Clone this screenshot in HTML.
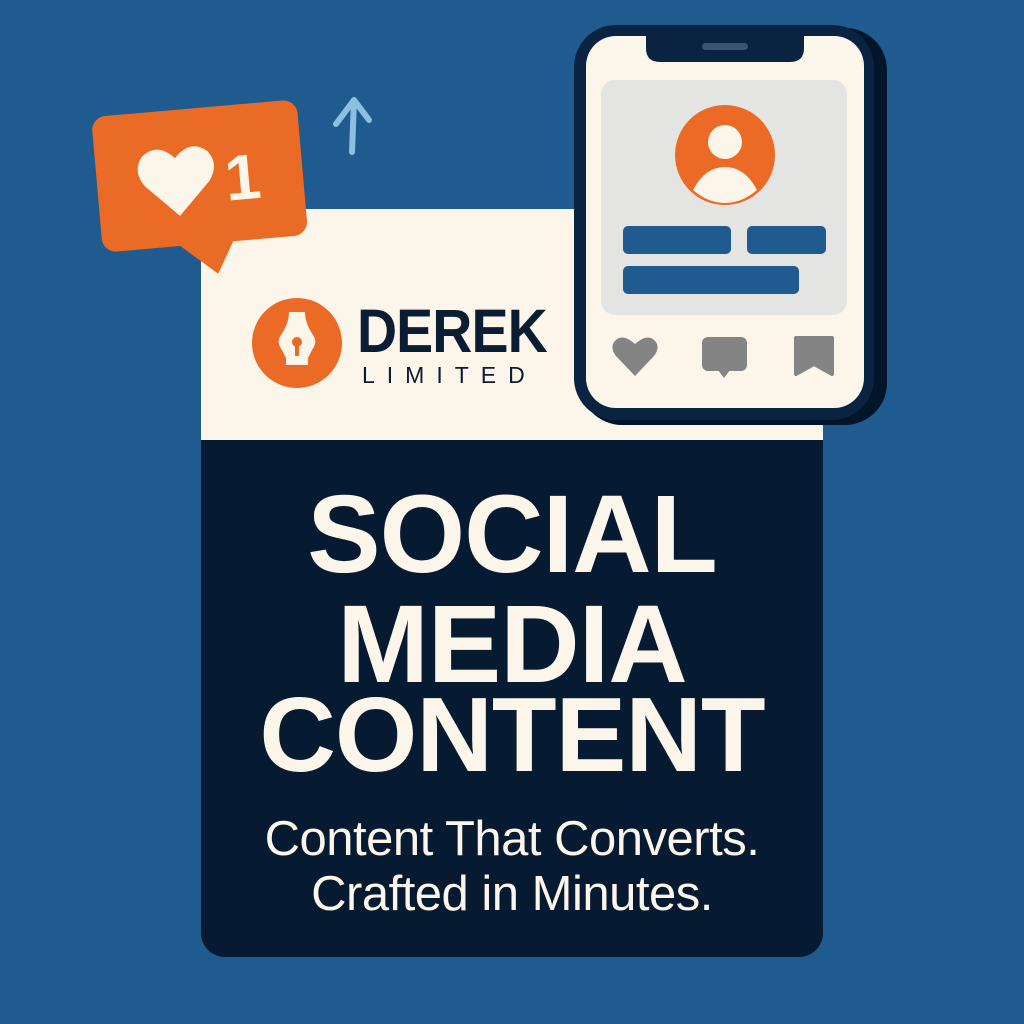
<!DOCTYPE html>
<html><head><meta charset="utf-8"><style>
html,body{margin:0;padding:0}
body{width:1024px;height:1024px;background:#1f5b8e;position:relative;overflow:hidden;font-family:"Liberation Sans",sans-serif}
.abs{position:absolute}
.top{left:201px;top:209px;width:622px;height:232px;background:#fcf5ea}
.bot{left:201px;top:440px;width:622px;height:517px;background:#061a31;border-radius:0 0 24px 24px}
.h{left:201px;width:622px;text-align:center;color:#fcf5ea;font-weight:bold;font-size:110px;line-height:1;letter-spacing:-1px}
.t{left:201px;width:622px;text-align:center;color:#fcf5ea;font-size:49px;line-height:1;letter-spacing:-0.5px}
</style></head><body>
<div class="abs top"></div>
<div class="abs bot"></div>
<div class="abs h" style="top:480px">SOCIAL</div>
<div class="abs h" style="top:590px">MEDIA</div>
<div class="abs h" style="top:682px;font-size:106px">CONTENT</div>
<div class="abs t" style="top:815px">Content That Converts.</div>
<div class="abs t" style="top:870px">Crafted in Minutes.</div>

<!-- logo -->
<svg class="abs" style="left:250px;top:296px" width="96" height="96" viewBox="0 0 96 96">
<circle cx="47" cy="47" r="45" fill="#eb6a25"/>
<path d="M39 16 H55 Q55 27 63 39 Q68 46 62 54 L58 62 V69 H36 V62 L32 54 Q26 46 31 39 Q39 27 39 16 Z" fill="#fcf5ea"/>
<circle cx="47" cy="46" r="5" fill="#eb6a25"/>
<rect x="45" y="46" width="4" height="14" fill="#eb6a25"/>
</svg>
<div class="abs" style="left:357px;top:296px;font-size:61px;font-weight:bold;color:#0b1d33;letter-spacing:-1px;transform:scaleX(0.91);transform-origin:left">DEREK</div>
<div class="abs" style="left:362px;top:362px;font-size:23px;color:#0b1d33;letter-spacing:12px">LIMITED</div>

<!-- like bubble -->
<svg class="abs" style="left:85px;top:90px" width="230" height="200" viewBox="0 0 230 200">
<g transform="rotate(-5 115 90)">
<rect x="12" y="18" width="206" height="136" rx="14" fill="#ea6b26"/>
<path d="M85 150 L125 185 L145 150 Z" fill="#ea6b26"/>
<path d="M92 124 L60 92 Q48 76 59 62 Q75 48 92 66 Q109 48 125 62 Q136 76 124 92 Z" fill="#fcf5ea"/>
<text x="140" y="113" font-family="Liberation Sans" font-weight="bold" font-size="64" fill="#fcf5ea">1</text>
</g>
</svg>
<!-- arrow -->
<svg class="abs" style="left:325px;top:90px" width="60" height="70" viewBox="0 0 60 70">
<path d="M27 62 L29 10 M11 34 L29 10 L44 30" stroke="#8cc0e0" stroke-width="6" fill="none" stroke-linecap="round" stroke-linejoin="round"/>
</svg>

<!-- phone -->
<svg class="abs" style="left:570px;top:20px" width="330" height="420" viewBox="0 0 330 420">
<rect x="10" y="8" width="307" height="397" rx="42" fill="#03152a"/>
<rect x="4" y="5" width="300" height="395" rx="42" fill="#0a2340"/>
<rect x="16" y="16" width="278" height="372" rx="30" fill="#fcf5ea"/>
<path d="M76 14 H234 V28 Q234 42 220 42 H90 Q76 42 76 28 Z" fill="#0a2340"/>
<rect x="132" y="23" width="46" height="7" rx="3.5" fill="#3a5370"/>
<rect x="31" y="60" width="246" height="235" rx="14" fill="#e4e5e2"/>
<circle cx="155" cy="135" r="50" fill="#eb6a25"/>
<circle cx="155" cy="122" r="17" fill="#fcf5ea"/>
<path d="M123 170 Q135 147 155 147 Q175 147 187 170 Q172 183 155 183 Q138 183 123 170 Z" fill="#fcf5ea"/>
<rect x="53" y="206" width="108" height="28" rx="5" fill="#1f5b8e"/>
<rect x="177" y="206" width="79" height="28" rx="5" fill="#1f5b8e"/>
<rect x="53" y="246" width="176" height="28" rx="5" fill="#1f5b8e"/>
<path d="M65 356 L46 336 Q40 328 44 322 Q52 312 65 324 Q78 312 86 322 Q90 328 84 336 Z" fill="#848484"/>
<rect x="132" y="317" width="45" height="34" rx="6" fill="#848484"/>
<path d="M148 350 L154 358 L160 350 Z" fill="#848484"/>
<path d="M226 318 H262 V354 L244 344 L226 354 Z" fill="#848484" stroke="#848484" stroke-width="4" stroke-linejoin="round"/>
</svg>
</body></html>
